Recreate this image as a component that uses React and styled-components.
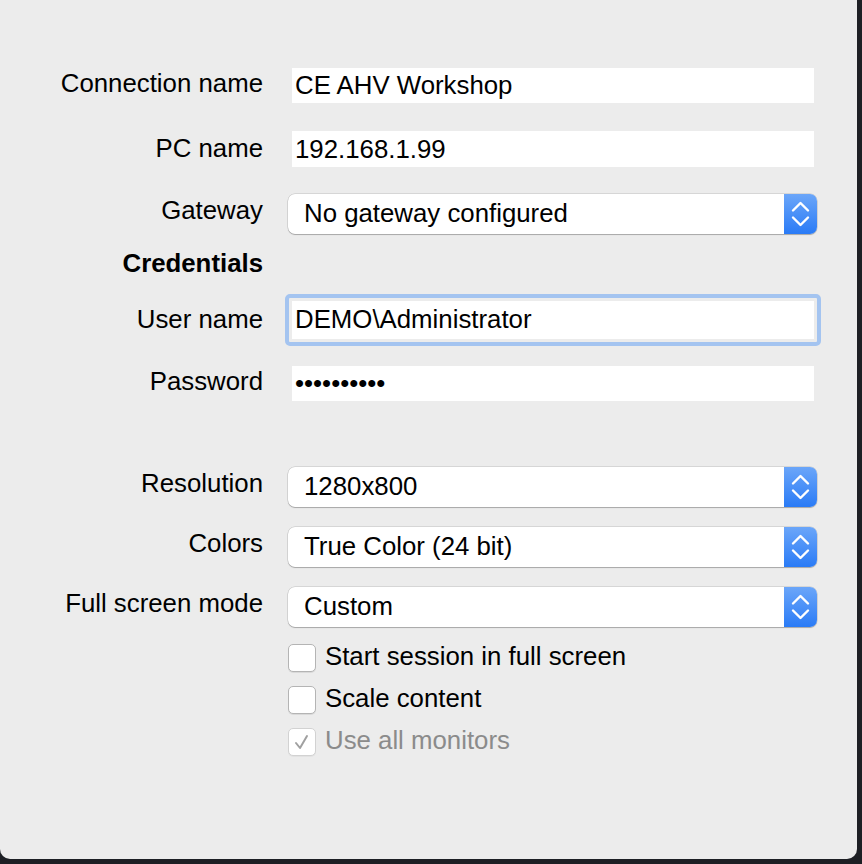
import React from "react";
import styled, { createGlobalStyle } from "styled-components";

const GlobalStyle = createGlobalStyle`
  html, body {
    margin: 0;
    padding: 0;
    background: #1d1f24;
  }
  body {
    font-family: "Liberation Sans", Arial, Helvetica, sans-serif;
  }
`;

const Panel = styled.div`
  width: 857px;
  height: 859px;
  background: #ececec;
  border-radius: 0 0 10px 10px;
  box-sizing: border-box;
  padding-top: 68px;
`;

const Row = styled.div`
  display: flex;
  align-items: flex-start;
  margin-top: ${(p) => p.$top || 0}px;
`;

const Label = styled.div`
  width: 263px;
  flex: none;
  text-align: right;
  font-size: 25.8px;
  line-height: 30px;
  color: #000;
  font-weight: ${(p) => (p.$bold ? 700 : 400)};
  margin-top: ${(p) => p.$shift || 0}px;
`;

const Field = styled.div`
  margin-left: 22px;
  width: 536px;
  display: flex;
  flex-direction: column;
`;

const TextInput = styled.input`
  display: block;
  box-sizing: border-box;
  margin: 0 7px;
  width: 522px;
  height: ${(p) => p.$h || 35}px;
  border: none;
  outline: none;
  background: #fff;
  padding: 0 0 0 3px;
  font-family: inherit;
  font-size: 25.8px;
  color: #000;
`;

const FocusRing = styled.div`
  box-sizing: border-box;
  border: 4px solid #a4c4f0;
  border-radius: 5px;
  padding: 3px;
  background: #ececec;

  ${TextInput} {
    margin: 0;
    width: 100%;
    padding-bottom: 2px;
  }
`;

const Select = styled.div`
  box-sizing: border-box;
  margin: 0 4px 0 3px;
  height: 40px;
  display: flex;
  align-items: stretch;
  background: #fff;
  border-radius: 7px;
  box-shadow: 0 0 0 0.5px rgba(0, 0, 0, 0.18), 0 1px 1px rgba(0, 0, 0, 0.22);
  overflow: hidden;
`;

const SelectValue = styled.div`
  flex: 1;
  padding-left: 16px;
  font-size: 25.8px;
  line-height: 38px;
  color: #000;
`;

const Stepper = styled.div`
  width: 33px;
  flex: none;
  background: linear-gradient(to bottom, #6ba6f9, #2a7bf6);
  display: flex;
  align-items: center;
  justify-content: center;
`;

const Check = styled.div`
  display: flex;
  align-items: center;
  margin-left: 3px;
  height: 28px;
`;

const Box = styled.span`
  box-sizing: border-box;
  width: 28px;
  height: 28px;
  flex: none;
  border-radius: 5px;
  background: #fff;
  border: 1px solid ${(p) => (p.$disabled ? "#d2d2d2" : "#b4b4b4")};
  box-shadow: 0 1px 0 rgba(0, 0, 0, ${(p) => (p.$disabled ? 0.04 : 0.08)});
  display: flex;
  align-items: center;
  justify-content: center;
  color: #9a9a9a;
`;

const CheckText = styled.span`
  margin-left: 9px;
  margin-top: -4px;
  font-size: 25.8px;
  line-height: 30px;
  color: ${(p) => (p.$disabled ? "#8b8b8b" : "#000")};
`;

const Chevrons = () => (
  <svg width="33" height="40" viewBox="0 0 33 40">
    <path
      d="M9 16.5 L16.5 9 L24 16.5 M9 23.5 L16.5 31 L24 23.5"
      fill="none"
      stroke="#fff"
      strokeWidth="2.4"
      strokeLinecap="round"
      strokeLinejoin="round"
    />
  </svg>
);

const Tick = () => (
  <svg width="20" height="20" viewBox="0 0 20 20">
    <path
      d="M4 11 L8 16 L15 4"
      fill="none"
      stroke="#a0a0a0"
      strokeWidth="2"
      strokeLinecap="round"
      strokeLinejoin="round"
    />
  </svg>
);

const Dropdown = ({ value }) => (
  <Select>
    <SelectValue>{value}</SelectValue>
    <Stepper>
      <Chevrons />
    </Stepper>
  </Select>
);

const CheckRow = ({ top, label, checked, disabled }) => (
  <Row $top={top}>
    <Label />
    <Field>
      <Check>
        <Box $disabled={disabled}>{checked && <Tick />}</Box>
        <CheckText $disabled={disabled}>{label}</CheckText>
      </Check>
    </Field>
  </Row>
);

export default function App() {
  return (
    <>
      <GlobalStyle />
      <Panel>
        <Row>
          <Label>Connection name</Label>
          <Field>
            <TextInput readOnly value="CE AHV Workshop" />
          </Field>
        </Row>
        <Row $top={28}>
          <Label $shift={2}>PC name</Label>
          <Field>
            <TextInput readOnly value="192.168.1.99" $h={36} />
          </Field>
        </Row>
        <Row $top={27}>
          <Label $shift={1}>Gateway</Label>
          <Field>
            <Dropdown value="No gateway configured" />
          </Field>
        </Row>
        <Row $top={12}>
          <Label $bold $shift={2}>Credentials</Label>
        </Row>
        <Row $top={16}>
          <Label $shift={10}>User name</Label>
          <Field>
            <FocusRing>
              <TextInput readOnly value="DEMO\Administrator" $h={38} />
            </FocusRing>
          </Field>
        </Row>
        <Row $top={20}>
          <Label>Password</Label>
          <Field>
            <TextInput readOnly value="••••••••••" />
          </Field>
        </Row>
        <Row $top={66}>
          <Label $shift={1}>Resolution</Label>
          <Field>
            <Dropdown value="1280x800" />
          </Field>
        </Row>
        <Row $top={20}>
          <Label $shift={1}>Colors</Label>
          <Field>
            <Dropdown value="True Color (24 bit)" />
          </Field>
        </Row>
        <Row $top={20}>
          <Label $shift={1}>Full screen mode</Label>
          <Field>
            <Dropdown value="Custom" />
          </Field>
        </Row>
        <CheckRow top={17} label="Start session in full screen" />
        <CheckRow top={14} label="Scale content" />
        <CheckRow top={14} label="Use all monitors" checked disabled />
      </Panel>
    </>
  );
}
